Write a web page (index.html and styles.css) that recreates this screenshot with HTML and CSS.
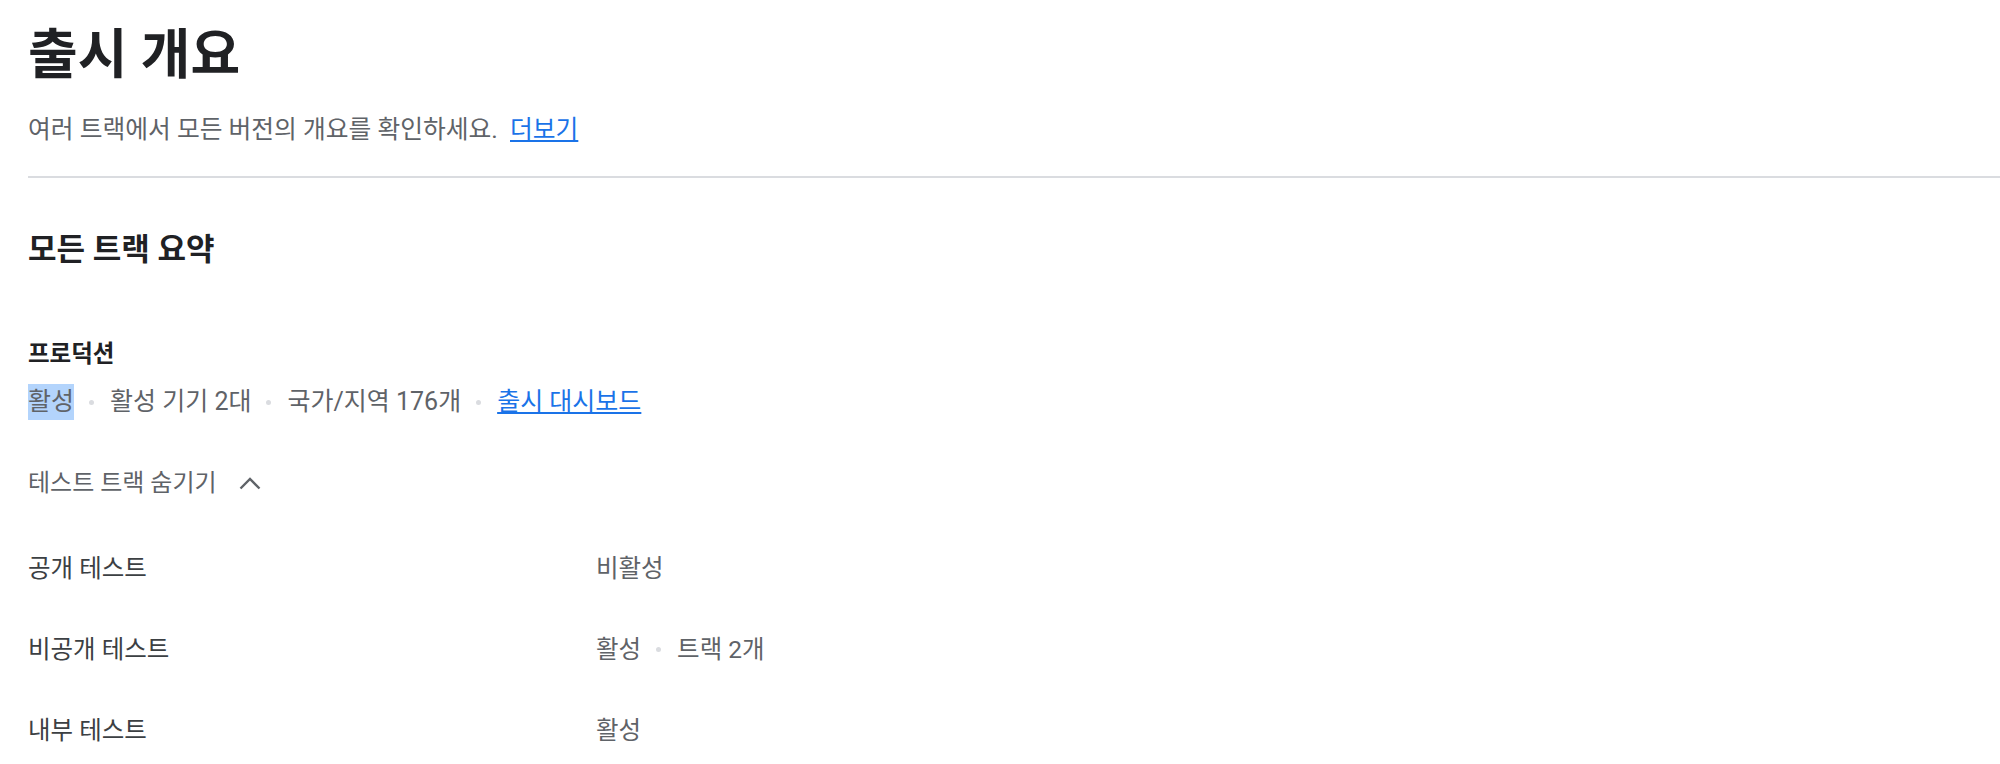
FILE: index.html
```html
<!DOCTYPE html>
<html lang="ko">
<head>
    <meta charset="UTF-8">
    <meta name="viewport" content="width=device-width, initial-scale=1.0">
    <title>출시 개요</title>
    <link rel="stylesheet" href="styles.css">
</head>
<body>

<main class="page">
    <header class="page-header">
        <h1 class="page-title">출시 개요</h1>
        <p class="page-desc">여러 트랙에서 모든 버전의 개요를 확인하세요. <a href="#" class="link">더보기</a></p>
    </header>

    <section class="summary">
        <h2 class="summary-title">모든 트랙 요약</h2>

        <div class="track-main">
            <h3 class="track-name">프로덕션</h3>
            <div class="meta meta-main">
                <span class="selected">활성</span>
                <span class="sep"></span>
                <span>활성 기기 2대</span>
                <span class="sep"></span>
                <span>국가/지역 176개</span>
                <span class="sep"></span>
                <a href="#" class="link">출시 대시보드</a>
            </div>
        </div>

        <button class="toggle" type="button">
            테스트 트랙 숨기기
            <svg class="chevron" width="22" height="13" viewBox="0 0 22 13">
                <polyline points="1.5,11.5 11,2 20.5,11.5" fill="none" stroke="#5f6368" stroke-width="2.4"/>
            </svg>
        </button>

        <div class="track-list">
            <div class="track-row">
                <span class="track-label">공개 테스트</span>
                <div class="meta">
                    <span>비활성</span>
                </div>
            </div>
            <div class="track-row">
                <span class="track-label">비공개 테스트</span>
                <div class="meta">
                    <span>활성</span>
                    <span class="sep"></span>
                    <span>트랙 2개</span>
                </div>
            </div>
            <div class="track-row">
                <span class="track-label">내부 테스트</span>
                <div class="meta">
                    <span>활성</span>
                </div>
            </div>
        </div>
    </section>
</main>

</body>
</html>
```

FILE: styles.css
```css
body {
    margin: 0;
    background: #fff;
    color: #202124;
    font-family: Roboto, "Noto Sans CJK KR", sans-serif;
}
.page {
    padding: 24px 0 0 28px;
}
.page-header {
    padding-bottom: 30px;
    border-bottom: 2px solid #dadce0;
}
.page-title {
    margin: 0;
    font-size: 54px;
    line-height: 64px;
    font-weight: 600;
}
.page-desc {
    margin: 26px 0 0;
    font-size: 24.75px;
    line-height: 32px;
    color: #5f6368;
}
.page-desc .link {
    margin-left: 6px;
}
.link {
    color: #1a73e8;
    text-decoration: underline;
}
.summary-title {
    margin: 54px 0 0;
    font-size: 31px;
    line-height: 36px;
    font-weight: 600;
}
.track-name {
    margin: 72px 0 0;
    font-size: 23.5px;
    line-height: 28px;
    font-weight: 600;
}
.meta {
    display: flex;
    align-items: center;
    font-size: 24.5px;
    line-height: 33px;
    color: #5f6368;
}
.meta-main {
    margin-top: 16px;
    font-size: 25px;
    line-height: 36px;
}
.selected {
    background: #b3d4fc;
    color: #5f6368;
}
.sep {
    width: 5px;
    height: 5px;
    border-radius: 50%;
    background: #dadce0;
    margin: 0 16px 0 15px;
}
.toggle {
    display: flex;
    align-items: center;
    margin-top: 47px;
    padding: 0;
    border: none;
    background: none;
    font-family: inherit;
    font-size: 24px;
    line-height: 32px;
    color: #5f6368;
    cursor: pointer;
}
.chevron {
    margin-left: 22px;
}
.track-list {
    margin-top: 29px;
}
.track-row {
    display: grid;
    grid-template-columns: 568px 1fr;
    align-items: center;
    padding: 24px 0;
}
.track-label {
    font-size: 24.5px;
    line-height: 33px;
    color: #3c4043;
}
```
